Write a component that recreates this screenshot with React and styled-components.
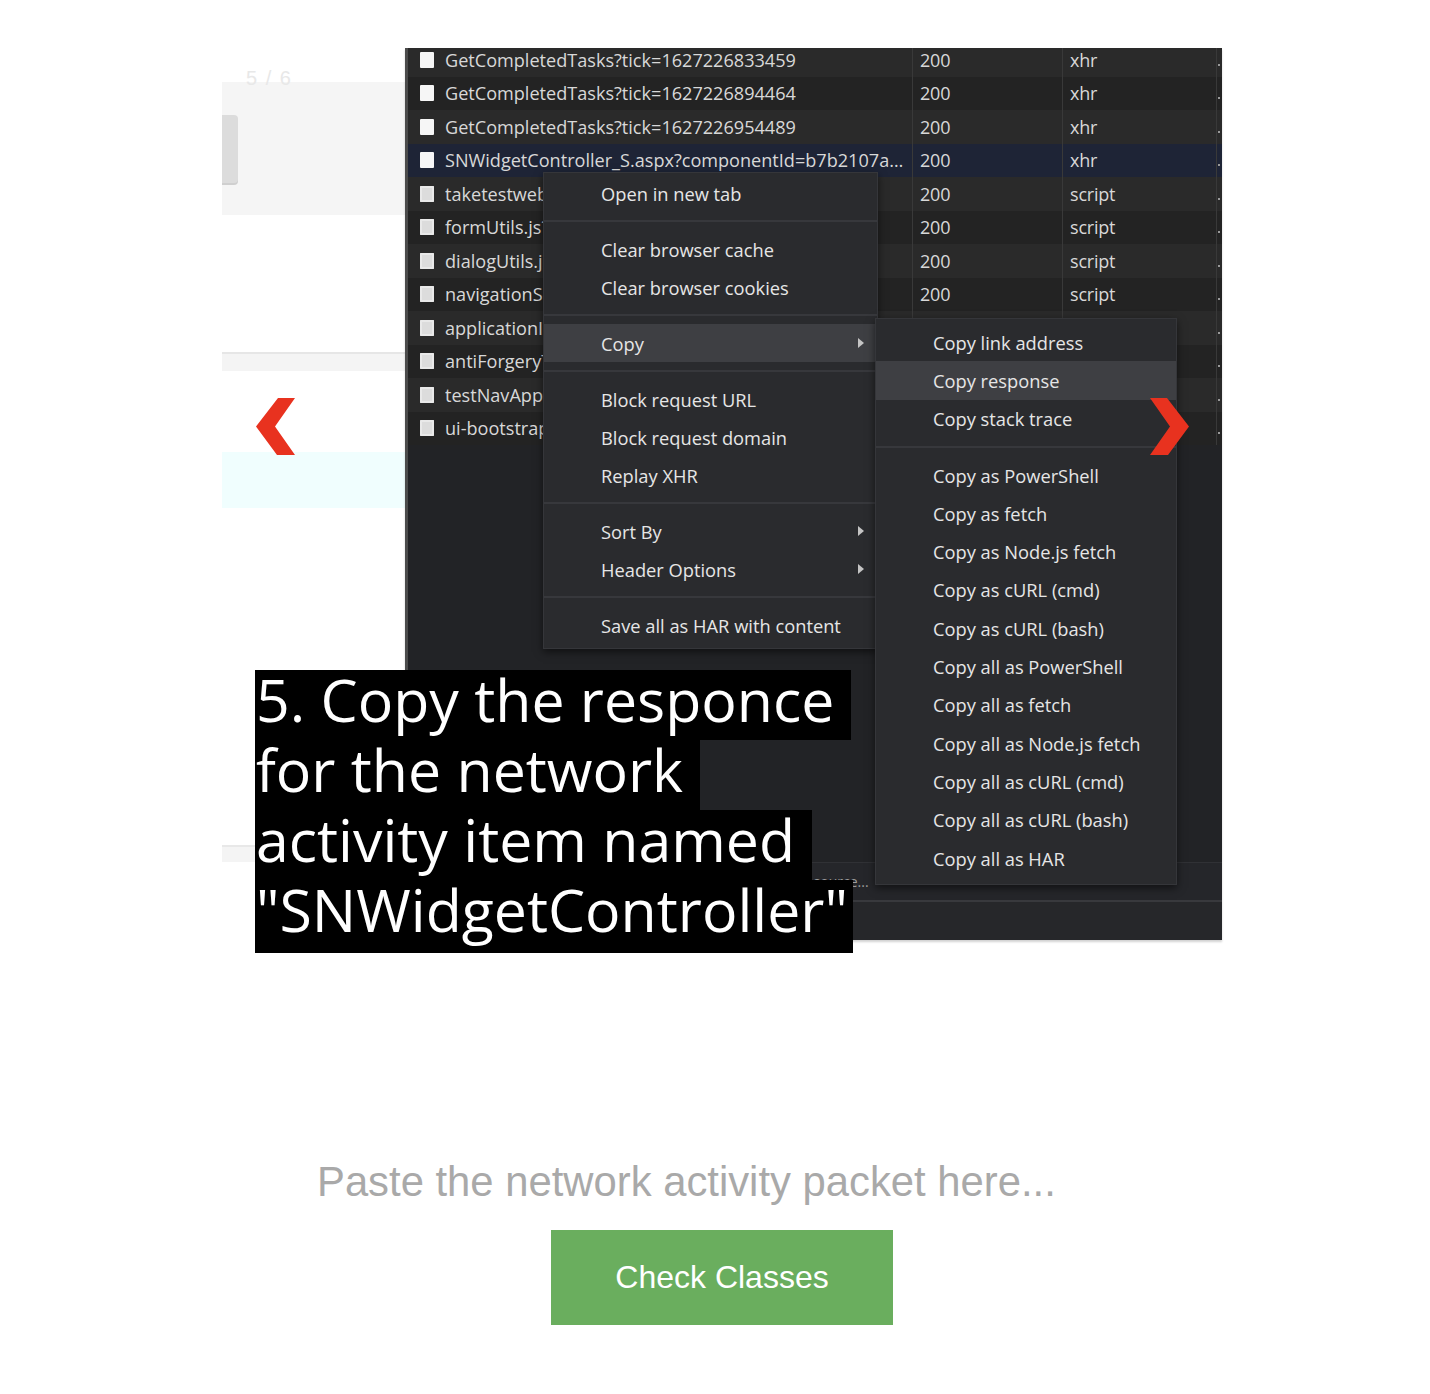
import React from "react";
import styled, { createGlobalStyle } from "styled-components";

const GlobalStyle = createGlobalStyle`
  html, body {
    margin: 0;
    padding: 0;
    background: #fff;
  }
  body {
    font-family: "Liberation Sans", Arial, sans-serif;
  }
`;

const requests = [
  { name: "GetCompletedTasks?tick=1627226833459", status: "200", type: "xhr" },
  { name: "GetCompletedTasks?tick=1627226894464", status: "200", type: "xhr" },
  { name: "GetCompletedTasks?tick=1627226954489", status: "200", type: "xhr" },
  { name: "SNWidgetController_S.aspx?componentId=b7b2107a6e2d", status: "200", type: "xhr", selected: true },
  { name: "taketestwebservice.js?v=2", status: "200", type: "script", dim: true },
  { name: "formUtils.js?v=2", status: "200", type: "script", dim: true },
  { name: "dialogUtils.js?v=2", status: "200", type: "script", dim: true },
  { name: "navigationService.js", status: "200", type: "script", dim: true },
  { name: "applicationInsights.js", status: "200", type: "script", dim: true },
  { name: "antiForgeryToken.js", status: "200", type: "script", dim: true },
  { name: "testNavApp.js", status: "200", type: "script", dim: true },
  { name: "ui-bootstrap-tpls.min.js", status: "200", type: "script", dim: true },
];

// groups of the context menu, separated by a line
const menuGroups = [
  [{ label: "Open in new tab" }],
  [{ label: "Clear browser cache" }, { label: "Clear browser cookies" }],
  [{ label: "Copy", sub: true, active: true }],
  [{ label: "Block request URL" }, { label: "Block request domain" }, { label: "Replay XHR" }],
  [{ label: "Sort By", sub: true }, { label: "Header Options", sub: true }],
  [{ label: "Save all as HAR with content" }],
];

const copyGroups = [
  [{ label: "Copy link address" }, { label: "Copy response", active: true }, { label: "Copy stack trace" }],
  [
    { label: "Copy as PowerShell" },
    { label: "Copy as fetch" },
    { label: "Copy as Node.js fetch" },
    { label: "Copy as cURL (cmd)" },
    { label: "Copy as cURL (bash)" },
    { label: "Copy all as PowerShell" },
    { label: "Copy all as fetch" },
    { label: "Copy all as Node.js fetch" },
    { label: "Copy all as cURL (cmd)" },
    { label: "Copy all as cURL (bash)" },
    { label: "Copy all as HAR" },
  ],
];

const Page = styled.div`
  width: 1430px;
  min-height: 1394px;
  padding-top: 48px;
  box-sizing: border-box;
`;

const Slideshow = styled.div`
  position: relative;
  width: 1000px;
  height: 892px;
  margin-left: 222px;
  display: flex;
`;

const NumberText = styled.div`
  position: absolute;
  left: 24px;
  top: 19px;
  font-size: 20px;
  line-height: 22px;
  word-spacing: 3px;
  color: #e8e8e8;
  z-index: 2;
`;

const LightPane = styled.div`
  flex: 0 0 183px;
  display: flex;
  flex-direction: column;
  background: #fff;
`;

const LightBlock = styled.div`
  box-sizing: border-box;
  height: ${(p) => p.$h}px;
  margin-top: ${(p) => p.$mt || 0}px;
  padding-top: ${(p) => p.$pt || 0}px;
  background: ${(p) => p.$bg};
  border-top: ${(p) => (p.$line ? `2px solid ${p.$line}` : "none")};
`;

const Tab = styled.div`
  width: 16px;
  height: 68px;
  background: #dcdcdc;
  border-radius: 0 4px 4px 0;
  box-shadow: 0 2px 0 #cfcfcf;
`;

const DevPanel = styled.div`
  position: relative;
  flex: 1;
  display: flex;
  flex-direction: column;
  background: #222326;
  border-left: 3px solid #4b4b4b;
  overflow: hidden;
  font-family: "Open Sans", "Noto Sans", sans-serif;
  box-shadow: 0 2px 2px rgba(0, 0, 0, 0.18);
`;

const RequestTable = styled.div`
  margin-top: -5px;
  display: flex;
  flex-direction: column;
`;

const Row = styled.div`
  display: flex;
  height: 33.5px;
  background: ${(p) => (p.$selected ? "#1e2436" : p.$odd ? "#232323" : "#2a2a2a")};
`;

const NameCell = styled.div`
  flex: 0 0 505px;
  box-sizing: border-box;
  display: flex;
  align-items: center;
  gap: 11px;
  padding: 0 8px 0 12px;
  border-right: 1px solid #393939;
  overflow: hidden;
`;

const Checkbox = styled.span`
  flex: 0 0 14px;
  height: 16px;
  border-radius: 1px;
  background: ${(p) => (p.$dim ? "#dcdcdc" : "#f6f6f6")};
  box-shadow: ${(p) => (p.$dim ? "inset 0 0 0 2px #e9e9e9" : "none")};
`;

const NameText = styled.span`
  font-size: 18.1px;
  color: #d8d8d8;
  white-space: nowrap;
  overflow: hidden;
  text-overflow: ellipsis;
`;

const Cell = styled.div`
  flex: 0 0 ${(p) => p.$w}px;
  box-sizing: border-box;
  display: flex;
  align-items: center;
  padding-left: 7px;
  border-right: 1px solid #393939;
  font-size: 18px;
  color: #d8d8d8;
  letter-spacing: -0.2px;
`;

const EdgeCell = styled.div`
  flex: 1;
  display: flex;
  align-items: center;
  &::before {
    content: "";
    width: 2px;
    height: 2px;
    margin-left: 1px;
    margin-top: 10px;
    background: #9a9a9a;
  }
`;

const Filler = styled.div`
  flex: 1;
`;

const StatusBar = styled.div`
  height: 38px;
  box-sizing: border-box;
  display: flex;
  align-items: center;
  padding-left: 392px;
  background: #25262a;
  border-top: 1px solid #303135;
  font-size: 14px;
  color: #9c9c9c;
  white-space: nowrap;
`;

const BottomBar = styled.div`
  height: 40px;
  box-sizing: border-box;
  background: #26272a;
  border-top: 2px solid #38393d;
`;

const Menu = styled.div`
  position: absolute;
  left: ${(p) => p.$left}px;
  top: ${(p) => p.$top}px;
  width: ${(p) => p.$w}px;
  box-sizing: border-box;
  padding: ${(p) => p.$pad};
  background: #2a2b2e;
  border: 1px solid #35363a;
  box-shadow: 0 3px 8px rgba(0, 0, 0, 0.55);
  z-index: ${(p) => p.$z};
`;

const MenuItem = styled.div`
  height: ${(p) => p.$h}px;
  display: flex;
  align-items: center;
  justify-content: space-between;
  padding: 0 13px 0 57px;
  font-size: 18.3px;
  color: #e6e6e6;
  white-space: nowrap;
  background: ${(p) => (p.$active ? "#3e3f43" : "transparent")};
`;

const Caret = styled.span`
  width: 0;
  height: 0;
  border-left: 6px solid #c4c4c4;
  border-top: 5px solid transparent;
  border-bottom: 5px solid transparent;
`;

const Separator = styled.div`
  height: 2px;
  margin: 8px 0;
  background: #37383c;
`;

const Caption = styled.div`
  position: absolute;
  left: 33px;
  top: 622px;
  display: flex;
  flex-direction: column;
  align-items: flex-start;
  z-index: 20;
  font-family: "Open Sans", "Noto Sans", sans-serif;
  font-size: 59px;
  line-height: 58px;
  color: #fff;
`;

const CaptionLine = styled.span`
  display: block;
  white-space: nowrap;
  background: #000;
  padding: 0 ${(p) => p.$pr}px ${(p) => 12 + (p.$pb || 0)}px 1px;
`;

const ArrowButton = styled.div`
  position: absolute;
  left: ${(p) => p.$left}px;
  top: 350px;
  width: 39px;
  height: 57px;
  cursor: pointer;
  z-index: 30;
`;

const Form = styled.div`
  width: 1000px;
  margin: 214px 0 0 222px;
  display: flex;
  flex-direction: column;
  align-items: center;
`;

const Packet = styled.textarea`
  width: 822px;
  height: 62px;
  box-sizing: border-box;
  padding: 4px 4px 4px 6px;
  border: none;
  outline: none;
  resize: none;
  overflow: hidden;
  font-family: "Liberation Sans", Arial, sans-serif;
  font-size: 41.8px;
  line-height: 48px;
  color: #333;
  background: transparent;
  &::placeholder {
    color: #a9a9a9;
  }
`;

const CheckButton = styled.button`
  margin-top: 14px;
  width: 342px;
  height: 95px;
  border: none;
  background: #6aae5e;
  color: #fff;
  font-family: "Liberation Sans", Arial, sans-serif;
  font-size: 32px;
  cursor: pointer;
`;

const Chevron = ({ dir }) => (
  <svg width="39" height="57" viewBox="0 0 39 57">
    <polygon
      fill="#e8321f"
      points={dir === "left" ? "22,0 39,0 19,28.5 39,57 21,57 0,28.5" : "17,0 0,0 20,28.5 0,57 18,57 39,28.5"}
    />
  </svg>
);

const ContextMenu = ({ groups, rowHeight, ...rest }) => (
  <Menu {...rest}>
    {groups.map((group, gi) => (
      <React.Fragment key={gi}>
        {gi > 0 && <Separator />}
        {group.map((item) => (
          <MenuItem key={item.label} $h={rowHeight} $active={item.active}>
            {item.label}
            {item.sub && <Caret />}
          </MenuItem>
        ))}
      </React.Fragment>
    ))}
  </Menu>
);

export default function App() {
  return (
    <Page>
      <GlobalStyle />
      <Slideshow>
        <NumberText>5 / 6</NumberText>
        <LightPane>
          <LightBlock $h={133} $mt={34} $pt={33} $bg="#f5f5f5">
            <Tab />
          </LightBlock>
          <LightBlock $h={19} $mt={137} $bg="#f4f4f4" $line="#e6e6e6" />
          <LightBlock $h={56} $mt={81} $bg="#f0fefe" />
          <LightBlock $h={17} $mt={337} $bg="#f4f4f4" $line="#e8e8e8" />
        </LightPane>

        <DevPanel>
          <RequestTable>
            {requests.map((r, i) => (
              <Row key={r.name} $odd={i % 2 === 1} $selected={r.selected}>
                <NameCell>
                  <Checkbox $dim={r.dim} />
                  <NameText>{r.name}</NameText>
                </NameCell>
                <Cell $w={150}>{r.status}</Cell>
                <Cell $w={154}>{r.type}</Cell>
                <EdgeCell />
              </Row>
            ))}
          </RequestTable>
          <Filler />
          <StatusBar>resource...</StatusBar>
          <BottomBar />

          <ContextMenu groups={menuGroups} rowHeight={38} $left={135} $top={124} $w={335} $pad="1px 0 4px" $z={5} />
          <ContextMenu groups={copyGroups} rowHeight={38.3} $left={467} $top={270} $w={302} $pad="4px 0 7px" $z={6} />
        </DevPanel>

        <ArrowButton $left={34}>
          <Chevron dir="left" />
        </ArrowButton>
        <ArrowButton $left={928}>
          <Chevron dir="right" />
        </ArrowButton>

        <Caption>
          <CaptionLine $pr={17}>5. Copy the responce</CaptionLine>
          <CaptionLine $pr={17}>for the network</CaptionLine>
          <CaptionLine $pr={17}>activity item named</CaptionLine>
          <CaptionLine $pr={5} $pb={3}>"SNWidgetController"</CaptionLine>
        </Caption>
      </Slideshow>

      <Form>
        <Packet placeholder="Paste the network activity packet here..." />
        <CheckButton>Check Classes</CheckButton>
      </Form>
    </Page>
  );
}
